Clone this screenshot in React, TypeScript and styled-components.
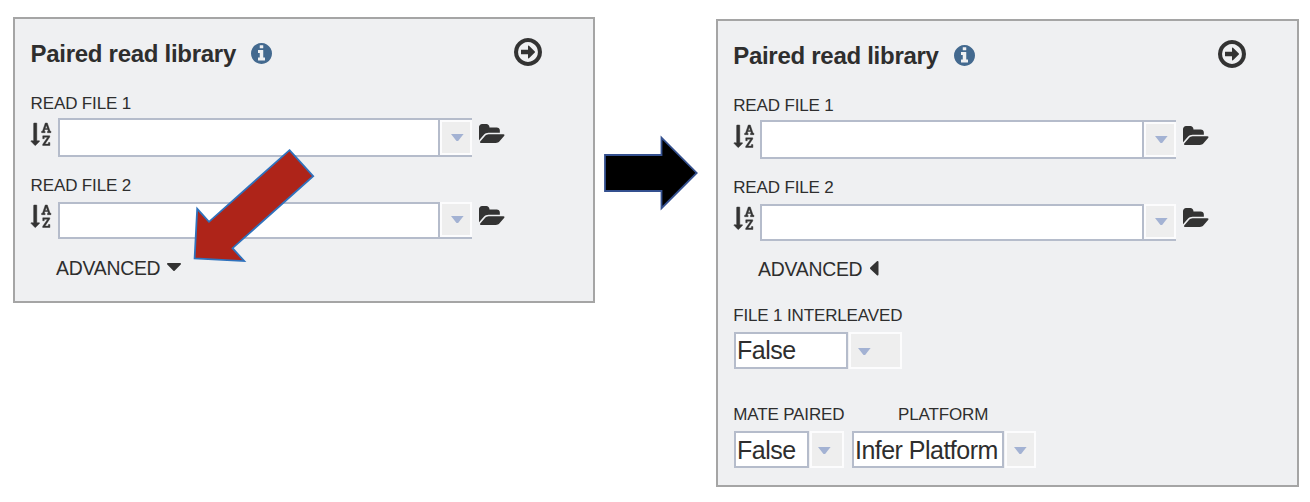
import React from "react";
import styled, { createGlobalStyle } from "styled-components";

const GlobalStyle = createGlobalStyle`
  *, *::before, *::after { box-sizing: border-box; }
  body {
    margin: 0;
    background: #fff;
    color: #2e2e2e;
    font-family: "Liberation Sans", Arial, sans-serif;
  }
`;

const Page = styled.main`
  position: relative;
  display: flex;
  align-items: flex-start;
  width: 1310px;
  height: 502px;
  padding: 17px 0 0 13px;
  overflow: hidden;
`;

const Panel = styled.section<{ $width: number; $height: number; $top?: number; $inset: number }>`
  flex: none;
  width: ${(p) => p.$width}px;
  height: ${(p) => p.$height}px;
  margin-top: ${(p) => p.$top ?? 0}px;
  padding: 19px 0 0 ${(p) => p.$inset}px;
  border: 2px solid #a5a5a5;
  background: #eff0f2;
`;

const Header = styled.header`
  display: flex;
  align-items: flex-start;
  height: 55px;
`;

const Title = styled.h2<{ $wide?: boolean }>`
  width: ${(p) => (p.$wide ? 222 : 221)}px;
  margin: 2px 0 0;
  padding-left: ${(p) => (p.$wide ? 1.2 : 0.5)}px;
  font-size: 24px;
  line-height: 28px;
  font-weight: bold;
  letter-spacing: -0.28px;
  white-space: nowrap;
`;

const Info = styled.span`
  display: flex;
  margin-top: 5px;
  color: #43698f;
`;

const AddButton = styled.button<{ $left: number }>`
  display: flex;
  margin: 0 0 0 ${(p) => p.$left}px;
  padding: 0;
  border: 0;
  background: none;
  color: #333;
`;

const Label = styled.div<{ $indent?: number; $nudge?: number }>`
  margin-left: ${(p) => p.$indent ?? 0}px;
  padding: 1px 0 0 ${(p) => p.$nudge ?? 0.6}px;
  height: 20px;
  font-size: 17px;
  line-height: 20px;
  letter-spacing: -0.14px;
  white-space: nowrap;
`;

const FileField = styled.div<{ $below: number }>`
  display: flex;
  flex-direction: column;
  margin-bottom: ${(p) => p.$below}px;
`;

const FileRow = styled.div<{ $gap: number }>`
  display: flex;
  align-items: flex-start;
  margin-top: ${(p) => p.$gap}px;
`;

const SortIcon = styled.span<{ $top: number; $left: number }>`
  display: flex;
  width: 28px;
  padding: ${(p) => p.$top}px 0 0 ${(p) => p.$left}px;
  color: #333;
`;

const FolderIcon = styled.span<{ $top: number }>`
  display: flex;
  margin: ${(p) => p.$top}px 0 0 7px;
  color: #333;
`;

const Combo = styled.div<{ $height: number; $open?: boolean; $wide?: boolean }>`
  display: flex;
  width: ${(p) => (p.$wide ? 416 : 414)}px;
  height: ${(p) => p.$height}px;
  border: 2px solid #b5bccb;
  border-right: 0;
  background: #fff;
  ${(p) => (p.$open ? "border-top-width: 0;" : "")}
`;

const ComboInput = styled.div<{ $lined?: boolean; $wide?: boolean }>`
  width: ${(p) => (p.$wide ? 382 : 380)}px;
  border-right: 2px solid #b5bccb;
  ${(p) => (p.$lined ? "border-top: 2px solid #b5bccb;" : "")}
`;

const DropButton = styled.div<{ $width?: number; $pad: number; $drop?: number }>`
  display: flex;
  align-items: center;
  ${(p) => (p.$width ? `width: ${p.$width}px;` : "flex: 1;")}
  padding: ${(p) => p.$drop ?? 0}px 0 0 ${(p) => p.$pad}px;
  border: 2px solid #fcfcfd;
  background: #eee;
`;

const Advanced = styled.div`
  display: flex;
  align-items: flex-start;
  height: 24px;
  padding-left: 26px;
  font-size: 19.4px;
  line-height: 24px;
  letter-spacing: -0.24px;
`;

const CaretSlot = styled.span<{ $left: number; $top: number }>`
  display: flex;
  margin: ${(p) => p.$top}px 0 0 ${(p) => p.$left}px;
  color: #333;
`;

const LabelRow = styled.div<{ $above: number }>`
  display: flex;
  margin-top: ${(p) => p.$above}px;
`;

const SelectRow = styled.div<{ $gap: number }>`
  display: flex;
  height: 37px;
  margin-top: ${(p) => p.$gap}px;
  padding-left: 2px;
`;

const Value = styled.div<{ $width: number; $lift?: number }>`
  display: flex;
  align-items: center;
  width: ${(p) => p.$width}px;
  padding: 0 0 ${(p) => p.$lift ?? 0}px 1px;
  border: 2px solid #b5bccb;
  background: #fff;
  font-size: 25px;
  line-height: 28px;
  letter-spacing: -0.52px;
  white-space: nowrap;
`;

const Spacer = styled.div<{ $width: number }>`
  flex: none;
  width: ${(p) => p.$width}px;
`;

const NextArrow = styled.svg`
  flex: none;
  margin: 115px 17px 0 7px;
`;

const Pointer = styled.svg`
  position: absolute;
  left: 188px;
  top: 144px;
`;

type GlyphProps = { box: string; width: number; height: number; d: string; weight?: number };
const Glyph = ({ box, width, height, d, weight = 0 }: GlyphProps) => (
  <svg
    viewBox={box}
    width={width}
    height={height}
    preserveAspectRatio="none"
    fill="currentColor"
    stroke="currentColor"
    strokeWidth={weight}
    overflow="visible"
    aria-hidden="true"
  >
    <path d={d} />
  </svg>
);

const infoPath =
  "M1152 1376v-160q0-14-9-23t-23-9h-96v-512q0-14-9-23t-23-9h-320q-14 0-23 9t-9 23v160q0 14 9 23t23 9h96v320h-96q-14 0-23 9t-9 23v160q0 14 9 23t23 9h448q14 0 23-9t9-23zm-128-896v-160q0-14-9-23t-23-9h-192q-14 0-23 9t-9 23v160q0 14 9 23t23 9h192q14 0 23-9t9-23zm640 416q0 209-103 385.5t-279.5 279.5-385.5 103-385.5-103-279.5-279.5-103-385.5 103-385.5 279.5-279.5 385.5-103 385.5 103 279.5 279.5 103 385.5z";
const addPath =
  "M1280 896q0 14-9 23l-320 320q-9 9-23 9-13 0-22.5-9.5t-9.5-22.5v-192h-352q-13 0-22.5-9.5t-9.5-22.5v-192q0-13 9.5-22.5t22.5-9.5h352v-192q0-14 9-23t23-9q12 0 24 10l319 319q9 9 9 23zm160 0q0-148-73-273t-198-198-273-73-273 73-198 198-73 273 73 273 198 198 273 73 273-73 198-198 73-273zm224 0q0 209-103 385.5t-279.5 279.5-385.5 103-385.5-103-279.5-279.5-103-385.5 103-385.5 279.5-279.5 385.5-103 385.5 103 279.5 279.5 103 385.5z";
const folderPath =
  "M1943 952q0 31-31 66l-336 396q-43 51-120.5 86.5t-143.5 35.5h-1088q-34 0-60.5-13t-26.5-43q0-31 31-66l336-396q43-51 120.5-86.5t143.5-35.5h1088q34 0 60.5 13t26.5 43zm-343-344v160h-832q-94 0-197 47.5t-164 119.5l-337 396-5 6q0-4-.5-12.5t-.5-12.5v-960q0-92 66-158t158-66h320q92 0 158 66t66 158v32h544q92 0 158 66t66 158z";
const sortPath =
  "M1191 408h177l-72-218-12-47q-2-16-2-20h-4l-3 20q0 1-3.5 18t-7.5 29zm-455 1000q0 12-10 24l-319 319q-10 9-23 9-12 0-23-9l-320-320q-15-16-7-35 8-20 30-20h192v-1376q0-14 9-23t23-9h192q14 0 23 9t9 23v1376h192q14 0 23 9t9 23zm836 119v233h-584v-90l369-529q12-18 21-27l11-9v-3q-2 0-6.5.5t-7.5.5q-12 3-30 3h-232v115h-120v-229h567v89l-369 530q-6 8-21 26l-11 11v2l14-2q9-2 30-2h248v-119h121zm89-898v106h-288v-106h75l-47-144h-243l-47 144h75v106h-287v-106h70l230-662h162l230 662h70z";
const caretDownPath =
  "M1408 704q0 26-19 45l-448 448q-19 19-45 19t-45-19l-448-448q-19-19-19-45t19-45 45-19h896q26 0 45 19t19 45z";
const caretLeftPath =
  "M1216 448v896q0 26-19 45t-45 19-45-19l-448-448q-19-19-19-45t19-45l448-448q19-19 45-19t45 19 19 45z";

const Triangle = () => (
  <svg width="13" height="7" viewBox="0 0 13 7" aria-hidden="true">
    <path d="M0 0H12.6L7.1 7H5.5Z" fill="#a3b2d3" />
  </svg>
);

const PanelHeader = ({ wide }: { wide?: boolean }) => (
  <Header>
    <Title $wide={wide}>Paired read library</Title>
    <Info>
      <Glyph box="128 128 1536 1536" width={21} height={21} d={infoPath} />
    </Info>
    <AddButton $left={wide ? 243 : 242} aria-label="Add library">
      <Glyph box="128 128 1536 1536" width={28} height={28} d={addPath} />
    </AddButton>
  </Header>
);

type ReadFileProps = { label: string; gap: number; height: number; below: number; second?: boolean; wide?: boolean };
const ReadFile = ({ label, gap, height, below, second, wide }: ReadFileProps) => (
  <FileField $below={below}>
    <Label $nudge={wide ? 1.2 : 0.6}>{label}</Label>
    <FileRow $gap={gap}>
      <SortIcon $top={second ? 3 : 5} $left={wide ? 2 : 1}>
        <Glyph box="42 -33 1619 1793" width={20} height={22.5} d={sortPath} weight={36} />
      </SortIcon>
      <Combo $height={height} $open={second} $wide={wide}>
        <ComboInput $lined={second} $wide={wide} />
        <DropButton $pad={wide ? 8.5 : 9}>
          <Triangle />
        </DropButton>
      </Combo>
      <FolderIcon $top={second ? 3.6 : 5.6}>
        <Glyph box="64 128 1879 1408" width={25.5} height={19} d={folderPath} />
      </FolderIcon>
    </FileRow>
  </FileField>
);

export default function App() {
  return (
    <>
      <GlobalStyle />
      <Page>
        <Panel $width={582} $height={286} $inset={15}>
          <PanelHeader />
          <ReadFile label="READ FILE 1" gap={5} height={39} below={18} />
          <ReadFile label="READ FILE 2" gap={7} height={37} below={17} second />
          <Advanced>
            ADVANCED
            <CaretSlot $left={6.5} $top={7}>
              <Glyph box="384 640 1024 576" width={14} height={8} d={caretDownPath} />
            </CaretSlot>
          </Advanced>
        </Panel>
        <NextArrow width="97" height="82" viewBox="602 132 97 82" aria-hidden="true">
          <path
            d="M605 155H661.5V137.6L696.7 172.9L661.5 208.2V191H605Z"
            fill="#000"
            stroke="#34508f"
            strokeWidth="1.8"
          />
        </NextArrow>
        <Panel $width={583} $height={468} $top={2} $inset={14}>
          <PanelHeader wide />
          <ReadFile label="READ FILE 1" gap={5} height={39} below={18} wide />
          <ReadFile label="READ FILE 2" gap={7} height={37} below={16} second wide />
          <Advanced>
            ADVANCED
            <CaretSlot $left={7.5} $top={4}>
              <Glyph box="640 384 576 1024" width={8.5} height={14.5} d={caretLeftPath} />
            </CaretSlot>
          </Advanced>
          <LabelRow $above={24}>
            <Label $nudge={1.2}>FILE 1 INTERLEAVED</Label>
          </LabelRow>
          <SelectRow $gap={7}>
            <Value $width={114} $lift={2}>False</Value>
            <Spacer $width={1} />
            <DropButton $width={53} $pad={6.5} $drop={2}>
              <Triangle />
            </DropButton>
          </SelectRow>
          <LabelRow $above={35}>
            <Label $nudge={1.2}>MATE PAIRED</Label>
            <Label $indent={53}>PLATFORM</Label>
          </LabelRow>
          <SelectRow $gap={7}>
            <Value $width={75}>False</Value>
            <Spacer $width={1} />
            <DropButton $width={34} $pad={6} $drop={2}>
              <Triangle />
            </DropButton>
            <Spacer $width={8} />
            <Value $width={152}>Infer Platform</Value>
            <Spacer $width={1} />
            <DropButton $width={31} $pad={7} $drop={2}>
              <Triangle />
            </DropButton>
          </SelectRow>
        </Panel>
        <Pointer width="132" height="124" viewBox="188 144 132 124" aria-hidden="true">
          <path
            d="M289.5 150.2L313.2 176.2L232.5 248.2L244.2 261.1L194.6 258.4L197.2 208.8L209 221.8Z"
            fill="#ae2419"
            stroke="#2f72bd"
            strokeWidth="1.8"
          />
        </Pointer>
      </Page>
    </>
  );
}
